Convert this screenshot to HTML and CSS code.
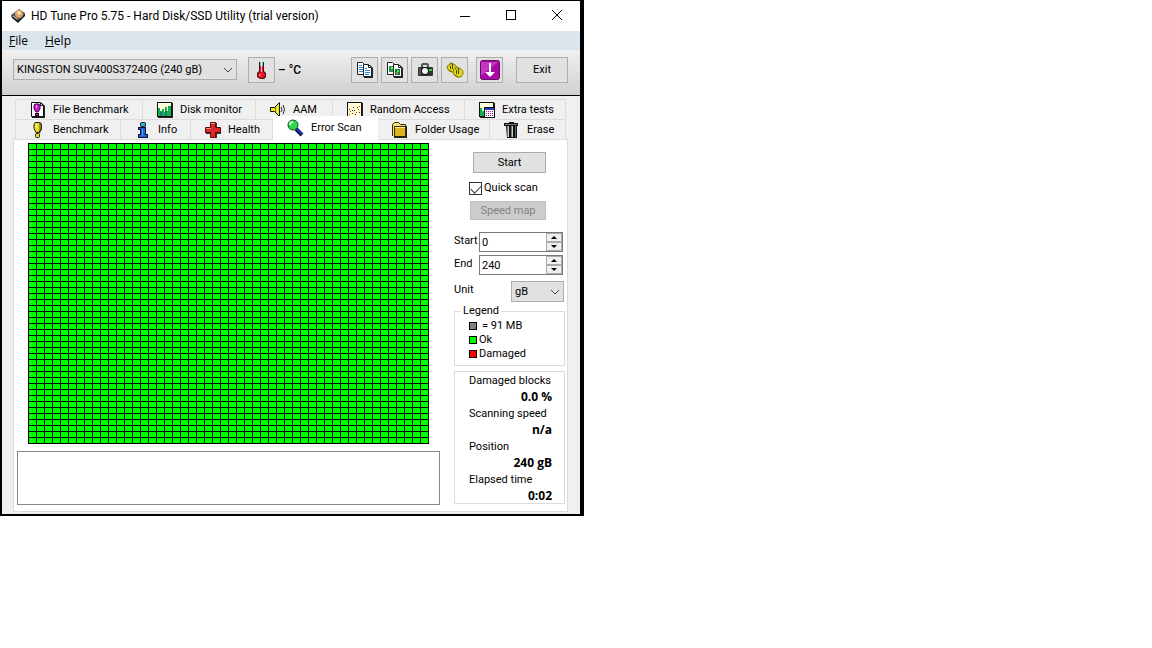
FILE: index.html
```html
<!DOCTYPE html>
<html lang="en">
<head>
<meta charset="UTF-8">
<meta name="viewport" content="width=device-width, initial-scale=1.0">
<title>HD Tune Pro</title>
<link rel="stylesheet" href="styles.css">
</head>
<body>
<div class="window">
    <header class="titlebar">
        <svg class="app-icon" width="16" height="16" viewBox="0 0 16 16">
            <path d="M1 7L9 1L15 5L8 12Z" fill="#555"/>
            <path d="M1 7L8 12V15L2 10ZM8 12L15 5V8L8 15Z" fill="#222"/>
            <ellipse cx="9" cy="6" rx="4" ry="4" fill="#d9a265"/>
            <ellipse cx="9" cy="5" rx="2" ry="2" fill="#f8dcb4"/>
            <path d="M3 8l4 3" stroke="#ccc"/>
        </svg>
        <h1>HD Tune Pro 5.75 - Hard Disk/SSD Utility (trial version)</h1>
        <div class="caption">
            <button aria-label="Minimize"><svg width="12" height="12"><path d="M1 6.500H11" stroke="#000"/></svg></button>
            <button aria-label="Maximize"><svg width="12" height="12"><rect x="1.500" y="0.500" width="9" height="9" fill="none" stroke="#000"/></svg></button>
            <button aria-label="Close"><svg width="12" height="12"><path d="M1 0L11 10M11 0L1 10" stroke="#000"/></svg></button>
        </div>
    </header>

    <nav class="menu">
        <a href="#"><u>F</u>ile</a>
        <a href="#"><u>H</u>elp</a>
    </nav>

    <div class="toolbar">
        <div class="dropdown drive">
            <select aria-label="Drive"><option>KINGSTON SUV400S37240G (240 gB)</option></select>
            <svg class="chevron" width="10" height="6"><path d="M1 1L5 5L9 1" fill="none" stroke="#444"/></svg>
        </div>
        <button class="tool" aria-label="Temperature">
            <svg width="18" height="18" viewBox="0 0 18 18">
                <path d="M6 1h5v9l2 2v4l-2 2H7l-3-2v-4l2-2Z" fill="#5c0c14"/>
                <path d="M7 1h3v4H7z" fill="#4cc"/><path d="M8 1h1v4H8z" fill="#cff"/>
                <path d="M7 5h3v6l2 2v2l-2 2H7l-2-2v-2l2-2Z" fill="#e01828"/>
                <path d="M8.500 5v6M7 13v2" stroke="#fbb"/>
            </svg>
        </button>
        <span class="temp">– °C</span>
        <div class="tools">
            <button class="tool" aria-label="Copy text">
                <svg width="18" height="18" viewBox="0 0 18 18">
                    <path d="M1.500 1.500h5l2 2v10h-7Z" fill="#fff" stroke="#222"/>
                    <path d="M3 4.500h3M3 6.500h5M3 8.500h5M3 10.500h5" stroke="#38c"/>
                    <path d="M8 4h6l3 3v10H8Z" fill="#222"/>
                    <path d="M7.500 3.500h5l3 3v9h-8Z" fill="#fff" stroke="#222"/>
                    <path d="M12.500 3.500v3h3" fill="none" stroke="#222"/>
                    <path d="M9 7.500h2M9 9.500h5M9 11.500h5M9 13.500h4" stroke="#28d"/>
                </svg>
            </button>
            <button class="tool" aria-label="Copy screenshot">
                <svg width="18" height="18" viewBox="0 0 18 18">
                    <path d="M1.500 1.500h5l2 2v10h-7Z" fill="#fff" stroke="#222"/>
                    <path d="M3 5h4v6H3z" fill="#1a9a50"/><path d="M5 6h2v2H5z" fill="#6f6"/>
                    <path d="M8 4h6l3 3v10H8Z" fill="#222"/>
                    <path d="M7.500 3.500h5l3 3v9h-8Z" fill="#fff" stroke="#222"/>
                    <path d="M12.500 3.500v3h3" fill="none" stroke="#222"/>
                    <path d="M9 8h5v6H9z" fill="#197a48"/><path d="M11 9h2v2h-2z" fill="#4e4"/><path d="M10 11h2v2h-2z" fill="#a82"/>
                </svg>
            </button>
            <button class="tool" aria-label="Save screenshot">
                <svg width="18" height="18" viewBox="0 0 18 18">
                    <path d="M6 6V4l1-1h4l1 1v2" fill="#ddd" stroke="#555" stroke-width="2"/>
                    <rect x="2" y="6" width="15" height="9" rx="1" fill="#333"/>
                    <path d="M3 7h2v7H3z" fill="#555"/>
                    <circle cx="9" cy="10" r="4" fill="#111"/><circle cx="9" cy="10" r="3" fill="#f2f2f2"/>
                    <path d="M13 8h3v2h-3z" fill="#2d4"/>
                </svg>
            </button>
            <button class="tool" aria-label="Options">
                <svg width="18" height="18" viewBox="0 0 18 18">
                    <g fill="#dcd51c" stroke="#8b8500">
                        <path d="M2 4h2V2h2v2l2-1 2 2v2l-1 3-3 1-3-1-2-3Z"/>
                        <path d="M8 8h2V6h2v2l2-1 3 3v3l-2 3h-4l-3-2-1-3Z"/>
                    </g>
                    <path d="M4.500 5v3M6.500 2v6M10.500 9v4M12.500 7v6" fill="none" stroke="#4b4700"/>
                    <path d="M3 9l3 2M9 14l3 2" stroke="#6b6500"/>
                </svg>
            </button>
            <button class="tool save" aria-label="Save">
                <svg width="20" height="20" viewBox="0 0 20 20">
                    <rect x="0.500" y="0.500" width="19" height="19" rx="2" fill="#a808a8" stroke="#60105f"/>
                    <path d="M1 2h17L1 16Z" fill="#c436c4"/>
                    <path d="M9 3h2v9h4l-5 5-5-5h4Z" fill="#fff"/>
                </svg>
            </button>
            <button class="button exit">Exit</button>
        </div>
    </div>

    <main class="content">
        <div class="tabs" role="tablist">
            <div class="tab-row back">
                <button class="tab" role="tab">
                    <svg width="16" height="18" viewBox="0 0 16 18">
                        <path d="M2 2h10l3 3v12H2Z" fill="#222"/><path d="M1.500 1.500h9l3 3v11h-12Z" fill="#fff" stroke="#111"/>
                        <path d="M10.500 1.500v3h3" fill="none" stroke="#111"/>
                        <path d="M5 3h4l1 2v3l-2 3H6L4 8V5Z" fill="#d018d0" stroke="#303"/>
                        <path d="M6.500 4v3" stroke="#faf"/><rect x="5.500" y="12.500" width="3" height="2" fill="#d018d0" stroke="#303"/>
                    </svg>File Benchmark
                </button>
                <button class="tab" role="tab">
                    <svg width="16" height="18" viewBox="0 0 16 18">
                        <path d="M1 2h15v15H1z" fill="#222"/><rect x="0.500" y="1.500" width="14" height="14" fill="#ffffd8" stroke="#111"/>
                        <path d="M1 15V7h2v3h2V8h2v3h1V6h2v4h1V5h3v10Z" fill="#14b050"/><path d="M3 11h2v4H3zM8 10h2v5H8z" fill="#187878"/>
                    </svg>Disk monitor
                </button>
                <button class="tab" role="tab">
                    <svg width="16" height="18" viewBox="0 0 16 18">
                        <path d="M0.500 6.500h4l5-5v14l-5-5h-4Z" fill="#f0e820" stroke="#111"/>
                        <path d="M5.500 6v5" stroke="#777000"/>
                        <path d="M11 6q2 3 0 5M13 4q3 5 0 9" fill="none" stroke="#222"/>
                    </svg>AAM
                </button>
                <button class="tab" role="tab">
                    <svg width="16" height="18" viewBox="0 0 16 18">
                        <path d="M1 2h15v15H1z" fill="#222"/><rect x="0.500" y="1.500" width="14" height="14" fill="#ffffd0" stroke="#111"/>
                        <path d="M2 13h1v1H2zM3 10h1v1H3zM5 12h1v1H5zM7 9h1v1H7zM9 11h1v1H9zM11 8h1v1h-1zM12 5h1v1h-1z" fill="#d22"/>
                        <path d="M2 8h1v1H2zM5 9h1v1H5zM6 6h1v1H6zM8 13h1v1H8zM10 6h1v1h-1zM12 11h1v1h-1z" fill="#22a"/>
                    </svg>Random Access
                </button>
                <button class="tab" role="tab">
                    <svg width="16" height="18" viewBox="0 0 16 18">
                        <path d="M1 2h15v15H1z" fill="#222"/><rect x="0.500" y="1.500" width="14" height="14" fill="#ffffe0" stroke="#111"/>
                        <path d="M1 15V7h2v3h3v5Z" fill="#14b050"/>
                        <rect x="5.500" y="6.500" width="10" height="10" fill="#fff" stroke="#111"/><path d="M6 7h9v2H6z" fill="#2040c0"/>
                        <path d="M7 10.500h8M7 12.500h8M7 14.500h8" stroke="#a19" stroke-dasharray="1 1"/>
                    </svg>Extra tests
                </button>
            </div>
            <div class="tab-row front">
                <button class="tab" role="tab">
                    <svg width="16" height="18" viewBox="0 0 16 18">
                        <path d="M6 1h4l2 2v5l-2 4H7L5 8" fill="#333"/>
                        <path d="M5 1.500h4l2 2v4l-2 4H6l-2-4v-4Z" fill="#e4dc18" stroke="#222"/>
                        <path d="M6.500 3v4" stroke="#ffc"/><path d="M9.500 3v6" stroke="#a09800"/>
                        <rect x="5.500" y="12.500" width="4" height="4" rx="1" fill="#e4dc18" stroke="#222"/>
                    </svg>Benchmark
                </button>
                <button class="tab" role="tab">
                    <svg width="16" height="18" viewBox="0 0 16 18">
                        <rect x="5" y="1" width="6" height="5" rx="2" fill="#124"/>
                        <rect x="6" y="2" width="4" height="3" rx="1" fill="#28b8e0"/>
                        <path d="M3 6h8v7h2v4H3v-4h2V9H3Z" fill="#112"/>
                        <path d="M4 7h6v7h2v2H4v-2h2V8H4Z" fill="#2060e0"/>
                        <path d="M7.500 8v7" stroke="#5ae"/>
                    </svg>Info
                </button>
                <button class="tab" role="tab">
                    <svg width="16" height="18" viewBox="0 0 16 18">
                        <path d="M6 2h6v5h4v6h-4v4H6v-4H1V7h5Z" fill="#333"/>
                        <path d="M5.500 1.500h5v5h5v5h-5v5h-5v-5h-5v-5h5Z" fill="#d82828" stroke="#5a0808"/>
                        <path d="M6 2.500h4M1 7.500h5" stroke="#f88"/>
                    </svg>Health
                </button>
                <button class="tab active" role="tab" aria-selected="true">
                    <svg width="18" height="18" viewBox="0 0 18 18">
                        <path d="M9 10l6 6" stroke="#113" stroke-width="4"/><path d="M10 10l5 5" stroke="#2030c8" stroke-width="2"/>
                        <circle cx="6" cy="6" r="5" fill="#30d850" stroke="#152"/>
                        <path d="M3 6q0-3 3-3" fill="none" stroke="#cfc" stroke-width="2"/>
                    </svg>Error Scan
                </button>
                <button class="tab" role="tab">
                    <svg width="16" height="18" viewBox="0 0 16 18">
                        <path d="M1 5h14v12H2Z" fill="#222"/>
                        <path d="M0.500 15V3.500l2-2h4l2 2h5V15" fill="#f4e47c" stroke="#332800"/>
                        <path d="M2.500 5.500h11v10h-11Z" fill="#e0b420" stroke="#332800"/>
                        <path d="M3 6.500h10" stroke="#fff08a"/>
                    </svg>Folder Usage
                </button>
                <button class="tab" role="tab">
                    <svg width="16" height="18" viewBox="0 0 16 18">
                        <path d="M2 5h11v12H3Z" fill="#111"/>
                        <path d="M3 5h2v11H3zM7 5h2v11H7z" fill="#777"/><path d="M4 5h1v11H4zM8 5h1v11H8z" fill="#ccc"/><path d="M11 5h1v11h-1z" fill="#666"/>
                        <path d="M0 2h14v3H0zM5 1h5v2H5z" fill="#111"/><path d="M1 3h12v1H1z" fill="#777"/>
                    </svg>Erase
                </button>
            </div>
        </div>

        <section class="panel">
            <div class="scan">
                <div class="map" role="img" aria-label="Block map"></div>
                <textarea class="log" aria-label="Log" readonly></textarea>
            </div>

            <aside class="side">
                <div class="actions">
                    <button class="button">Start</button>
                    <label class="check"><input type="checkbox" checked>Quick scan</label>
                    <button class="button speed" disabled>Speed map</button>
                </div>
                <div class="field">
                    <label for="start">Start</label>
                    <div class="spin">
                        <input id="start" type="text" value="0">
                        <div class="arrows"><button class="up" aria-label="Start up"></button><button class="down" aria-label="Start down"></button></div>
                    </div>
                </div>
                <div class="field">
                    <label for="end">End</label>
                    <div class="spin">
                        <input id="end" type="text" value="240">
                        <div class="arrows"><button class="up" aria-label="End up"></button><button class="down" aria-label="End down"></button></div>
                    </div>
                </div>
                <div class="field unit">
                    <label for="unit">Unit</label>
                    <div class="dropdown">
                        <select id="unit"><option>gB</option></select>
                        <svg class="chevron" width="10" height="6"><path d="M1 1L5 5L9 1" fill="none" stroke="#444"/></svg>
                    </div>
                </div>
                <fieldset class="legend">
                    <legend>Legend</legend>
                    <div class="size"><i class="block"></i>= 91 MB</div>
                    <div><i class="block ok"></i>Ok</div>
                    <div><i class="block bad"></i>Damaged</div>
                </fieldset>
                <dl class="stats">
                    <dt>Damaged blocks</dt><dd>0.0 %</dd>
                    <dt>Scanning speed</dt><dd>n/a</dd>
                    <dt>Position</dt><dd>240 gB</dd>
                    <dt>Elapsed time</dt><dd>0:02</dd>
                </dl>
            </aside>
        </section>
    </main>
</div>
</body>
</html>
```
FILE: styles.css
```css
* {
    box-sizing: border-box;
}
body {
    margin: 0;
    background: #fff;
    color: #000;
    font: 11px/16px Roboto, sans-serif;
}
button, input, select, textarea {
    font: inherit;
    color: inherit;
    margin: 0;
    padding: 0;
    border-radius: 0;
}
.window {
    max-width: 584px;
    border: solid #000;
    border-width: 1px 4px 2px 2px;
    background: #f0f0f0;
}
.titlebar {
    display: flex;
    align-items: center;
    height: 30px;
    padding-left: 8px;
    background: #fff;
}
.titlebar h1 {
    margin: 0 auto 0 5px;
    font-size: 12px;
    font-weight: normal;
}
.caption {
    display: flex;
}
.caption button {
    display: flex;
    align-items: center;
    justify-content: center;
    width: 46px;
    height: 29px;
    border: 0;
    background: none;
}
.menu {
    display: flex;
    gap: 17px;
    padding: 2px 7px 1px;
    background: #dce4ec;
    font-family: "Open Sans", sans-serif;
    font-size: 12px;
}
.menu a {
    color: #000;
    text-decoration: none;
}
.toolbar {
    display: flex;
    align-items: center;
    height: 46px;
    padding: 0 12px 6px 11px;
    border-bottom: 1px solid #000;
    background: linear-gradient(#f0f0f0, #d0d0d0);
}
.dropdown {
    position: relative;
}
.dropdown select {
    appearance: none;
    width: 100%;
    height: 21px;
    padding: 1px 3px 0;
    border: 1px solid #adadad;
    background: #e1e1e1;
}
.chevron {
    position: absolute;
    right: 4px;
    top: 8px;
    pointer-events: none;
}
.drive {
    width: 224px;
    margin-right: 11px;
}
.tool {
    display: flex;
    align-items: center;
    justify-content: center;
    width: 27px;
    height: 26px;
    border: 1px solid #adadad;
    background: #e1e1e1;
}
.temp {
    margin-left: 3px;
    font-size: 12px;
    font-weight: 500;
}
.tools {
    display: flex;
    gap: 3px;
    margin-left: auto;
}
.save {
    margin-left: 5px;
}
.button {
    height: 21px;
    padding-top: 1px;
    border: 1px solid #adadad;
    background: #e1e1e1;
}
.button:disabled {
    border-color: #bfbfbf;
    background: #ccc;
    color: #838383;
}
.exit {
    width: 52px;
    height: 26px;
    margin-left: 10px;
}
.content {
    padding: 3px 12px 2px 11px;
}
.tabs {
    padding: 0 2px;
}
.tab-row {
    display: grid;
    border-left: 1px solid #dcdcdc;
}
.back {
    grid-template-columns: 127fr 113fr 77fr 132fr 101fr;
}
.front {
    grid-template-columns: 105fr 70fr 82fr 105fr 112fr 76fr;
}
.tab {
    display: flex;
    align-items: center;
    gap: 7px;
    min-width: 0;
    height: 20px;
    padding: 1px 0 0 14px;
    border: solid #dcdcdc;
    border-width: 1px 1px 0 0;
    background: #f0f0f0;
    white-space: nowrap;
}
.tab svg {
    flex: none;
}
.tab.active {
    gap: 6px;
    height: 24px;
    margin: -3px 0 -1px;
    padding-bottom: 2px;
    border-color: #fff;
    background: #fff;
    z-index: 1;
}
.panel {
    display: grid;
    grid-template-columns: 1fr 111px;
    gap: 14px;
    padding: 3px 2px 6px 3px;
    border: 1px solid #dcdcdc;
    background: #fff;
}
.map {
    max-width: 401px;
    height: 301px;
    margin: 0 auto 7px;
    background:
        repeating-linear-gradient(90deg, #000 0 1px, transparent 1px 8px),
        repeating-linear-gradient(#000 0 1px, #0f0 1px 6px);
}
.log {
    display: block;
    width: 100%;
    height: 54px;
    border: 1px solid #828790;
    background: #fff;
    resize: none;
}
.side {
    padding-top: 9px;
}
.actions {
    display: flex;
    flex-direction: column;
    padding: 0 19px 0 15px;
    margin-bottom: 12px;
}
.actions .button {
    margin-left: 4px;
}
.actions .speed {
    height: 19px;
    margin-left: 1px;
}
.check {
    display: flex;
    align-items: center;
    gap: 2px;
    margin: 7px 0 5px;
    white-space: nowrap;
}
.check input {
    appearance: none;
    width: 13px;
    height: 13px;
    border: 1px solid #333;
    background: #fff;
}
.check input:checked::before {
    content: "";
    display: block;
    width: 9px;
    height: 5px;
    margin: 2px 1px;
    border: solid #333;
    border-width: 0 0 1px 1px;
    transform: rotate(-45deg);
}
.field {
    display: flex;
    justify-content: space-between;
    margin: 0 2px 3px 0;
}
.field label {
    padding-top: 1px;
}
.spin {
    display: flex;
    width: 84px;
    height: 20px;
    border: 1px solid #7a7a7a;
    background: #fff;
}
.spin input {
    flex: 1;
    min-width: 0;
    padding: 1px 0 0 2px;
    border: 0;
    background: none;
}
.arrows {
    display: flex;
    flex-direction: column;
    width: 16px;
}
.arrows button {
    display: flex;
    flex: 1;
    align-items: center;
    justify-content: center;
    border: 1px solid #acacac;
    background: #f0f0f0;
}
.arrows button::before {
    content: "";
    border: 3px solid transparent;
}
.arrows .up::before {
    border-top: 0;
    border-bottom-color: #000;
}
.arrows .down::before {
    border-bottom: 0;
    border-top-color: #000;
}
.unit {
    margin: 6px 1px 1px 0;
}
.unit .dropdown {
    width: 53px;
}
.legend {
    margin: 0;
    padding: 0 0 4px 14px;
    border: 1px solid #dcdcdc;
    line-height: 16px;
}
.legend legend {
    margin-left: -8px;
    padding: 0 2px;
}
.legend div {
    display: flex;
    align-items: center;
    gap: 2px;
    height: 14px;
}
.legend .size {
    gap: 5px;
}
.block {
    width: 8px;
    height: 8px;
    border: 1px solid #000;
    background: #808080;
}
.ok {
    background: #0f0;
}
.bad {
    background: #f00;
}
.stats {
    display: flex;
    flex-direction: column;
    margin: 5px 0 0;
    padding: 1px 12px 0 14px;
    border: 1px solid #dcdcdc;
    white-space: nowrap;
}
.stats dd {
    margin: 0 0 2px;
    text-align: right;
    font: bold 12px/15px "Open Sans", sans-serif;
}
.stats dd:last-child {
    margin: 0;
}
```
